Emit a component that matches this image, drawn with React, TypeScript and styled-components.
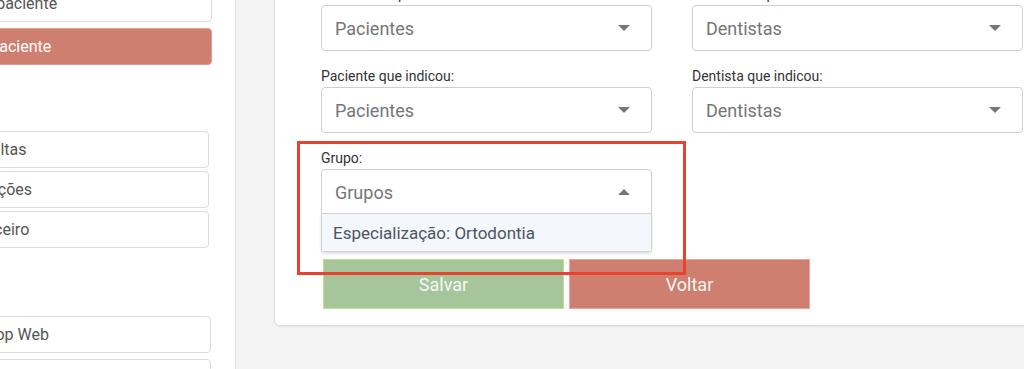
import React from "react";
import styled, { createGlobalStyle } from "styled-components";

const GlobalStyle = createGlobalStyle`
  html, body {
    margin: 0;
    padding: 0;
    height: 100%;
    overflow: hidden;
    background: #f3f3f3;
    font-family: Roboto, "Liberation Sans", Arial, sans-serif;
  }
  #root {
    height: 100%;
  }
`;

const Page = styled.div`
  display: flex;
  width: 1024px;
  height: 369px;
  overflow: hidden;
`;

const Sidebar = styled.aside`
  flex: 0 0 236px;
  box-sizing: border-box;
  background: #ffffff;
  border-right: 1px solid #e2e2e2;
  overflow: hidden;
`;

const NavGroup = styled.div<{ $top: number; $gap: number; $right: number }>`
  display: flex;
  flex-direction: column;
  gap: ${(p) => p.$gap}px;
  margin: ${(p) => p.$top}px ${(p) => p.$right}px 0 -58px;
`;

const NavItem = styled.div<{ $active?: boolean }>`
  height: 37px;
  box-sizing: border-box;
  display: flex;
  align-items: center;
  padding: 0 12px;
  border: 1px solid ${(p) => (p.$active ? "#e8978c" : "#dcdcdc")};
  border-radius: 4px;
  background: ${(p) => (p.$active ? "#cf7f70" : "#ffffff")};
  color: ${(p) => (p.$active ? "#ffffff" : "#555555")};
  font-size: 16px;
  white-space: nowrap;
`;

const Main = styled.main`
  flex: 1;
  padding-left: 38px;
  overflow: hidden;
`;

const Card = styled.section`
  position: relative;
  width: 800px;
  margin-top: -43px;
  box-sizing: border-box;
  padding: 28px 0 16px 46px;
  background: #ffffff;
  border: 1px solid #dedede;
  border-radius: 6px;
  box-shadow: 0 1px 2px rgba(0, 0, 0, 0.06);
`;

const FormGrid = styled.div`
  display: grid;
  grid-template-columns: 331px 331px;
  column-gap: 40px;
  row-gap: 17px;
`;

const Field = styled.div`
  position: relative;
  display: flex;
  flex-direction: column;
  gap: 3px;
`;

const Label = styled.label`
  font-size: 14px;
  line-height: 16px;
  color: #333333;
`;

const SelectBox = styled.div<{ $open?: boolean }>`
  height: 46px;
  box-sizing: border-box;
  display: flex;
  align-items: center;
  justify-content: space-between;
  padding: 0 21px 0 13px;
  border: 1px solid #cfcfcf;
  border-radius: ${(p) => (p.$open ? "4px 4px 0 0" : "4px")};
  background: #ffffff;
  color: #767676;
  font-size: 18px;
`;

const Caret = styled.span<{ $up?: boolean }>`
  width: 0;
  height: 0;
  border-left: 6px solid transparent;
  border-right: 6px solid transparent;
  ${(p) =>
    p.$up ? "border-bottom: 6px solid #777777;" : "border-top: 6px solid #777777;"}
`;

const Menu = styled.div`
  position: absolute;
  top: calc(100% - 2px);
  left: 0;
  right: 0;
  z-index: 2;
  box-sizing: border-box;
  border: 1px solid #d2d2d2;
  border-radius: 0 0 3px 3px;
  background: #ffffff;
  box-shadow: 0 2px 3px rgba(0, 0, 0, 0.12);
`;

const Option = styled.div`
  height: 37px;
  display: flex;
  align-items: center;
  padding-left: 11px;
  background: #f4f7fb;
  color: #4b5563;
  font-size: 17px;
`;

const Actions = styled.div`
  display: flex;
  gap: 5px;
  margin: 44px 0 0 2px;
`;

const ActionButton = styled.button<{ $tone: "save" | "back" }>`
  width: 241px;
  height: 50px;
  box-sizing: border-box;
  border: 1px solid ${(p) => (p.$tone === "save" ? "#bde18f" : "#f2a3a0")};
  background: ${(p) => (p.$tone === "save" ? "#a5c59a" : "#cf7f70")};
  color: #f6f6f6;
  font-family: inherit;
  font-size: 18px;
  cursor: pointer;
`;

const Highlight = styled.div`
  position: absolute;
  left: 22px;
  top: 183px;
  width: 389px;
  height: 134px;
  box-sizing: border-box;
  border: 3px solid #e8432e;
  pointer-events: none;
  z-index: 3;
`;

const Select = ({ value, open }: { value: string; open?: boolean }) => (
  <SelectBox $open={open}>
    <span>{value}</span>
    <Caret $up={open} />
  </SelectBox>
);

const App = () => {
  return (
    <>
      <GlobalStyle />
      <Page>
        <Sidebar>
          <NavGroup $top={-15} $gap={6} $right={23}>
            <NavItem>Novo paciente</NavItem>
            <NavItem $active>Meu paciente</NavItem>
          </NavGroup>
          <NavGroup $top={66} $gap={3} $right={26}>
            <NavItem>Consultas</NavItem>
            <NavItem>Avaliações</NavItem>
            <NavItem>Financeiro</NavItem>
          </NavGroup>
          <NavGroup $top={68} $gap={6} $right={24}>
            <NavItem>Desktop Web</NavItem>
            <NavItem>Mobile Web</NavItem>
          </NavGroup>
        </Sidebar>
        <Main>
          <Card>
            <FormGrid>
              <Field>
                <Label>Paciente responsável:</Label>
                <Select value="Pacientes" />
              </Field>
              <Field>
                <Label>Dentista responsável:</Label>
                <Select value="Dentistas" />
              </Field>
              <Field>
                <Label>Paciente que indicou:</Label>
                <Select value="Pacientes" />
              </Field>
              <Field>
                <Label>Dentista que indicou:</Label>
                <Select value="Dentistas" />
              </Field>
              <Field>
                <Label>Grupo:</Label>
                <Select value="Grupos" open />
                <Menu>
                  <Option>Especialização: Ortodontia</Option>
                </Menu>
              </Field>
            </FormGrid>
            <Actions>
              <ActionButton $tone="save">Salvar</ActionButton>
              <ActionButton $tone="back">Voltar</ActionButton>
            </Actions>
            <Highlight />
          </Card>
        </Main>
      </Page>
    </>
  );
};

export default App;
